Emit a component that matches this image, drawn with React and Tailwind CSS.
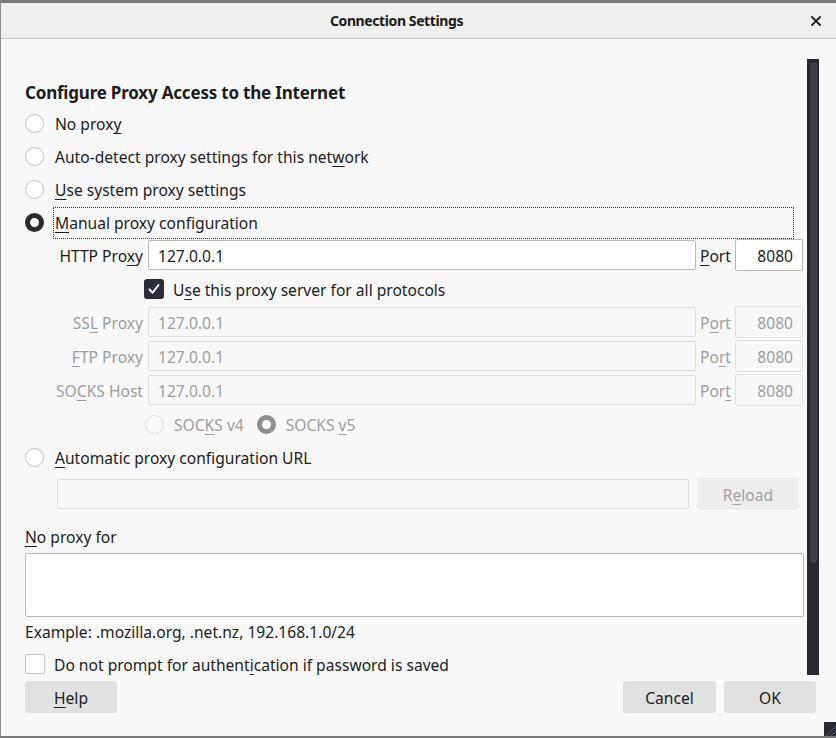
import React from "react";

const U = ({ children }) => <span className="underline underline-offset-[3px] decoration-1">{children}</span>;
const T = ({ children, className = "" }) => <span className={"pt-[3px] " + className}>{children}</span>;

function Radio({ state = "off" }) {
  if (state === "on")
    return <div className="w-[19px] h-[19px] rounded-full border-[5px] border-[#2b2b2f] bg-white shrink-0" />;
  if (state === "disabledOn")
    return <div className="w-[19px] h-[19px] rounded-full border-[5px] border-[#8f8f8f] bg-white shrink-0" />;
  if (state === "disabledOff")
    return <div className="w-[19px] h-[19px] rounded-full border border-[#dcdcdc] bg-[#fafafa] shrink-0" />;
  return <div className="w-[19px] h-[19px] rounded-full border border-[#c4c4c4] bg-white shrink-0" />;
}

function Field({ value, disabled, className = "", right }) {
  return (
    <div
      className={
        "flex items-center rounded-[2px] border px-[9px] " +
        (disabled ? "border-[#dedede] bg-[#f8f8f8] text-[#9d9d9d] " : "border-[#b9b9b9] bg-white text-[#1c1c1c] ") +
        (right ? "justify-end " : "") +
        className
      }
    >
      <T>{value}</T>
    </div>
  );
}

function ProxyRow({ label, disabled, portLabel }) {
  return (
    <div className="flex items-center h-[32px]">
      <div className={"w-[119px] text-right pr-[1px] pt-[3px] " + (disabled ? "text-[#9d9d9d]" : "")}>{label}</div>
      <Field value="127.0.0.1" disabled={disabled} className="ml-[4px] w-[548px] h-[30px]" />
      <div className={"w-[39px] pl-[4px] pt-[3px] " + (disabled ? "text-[#9d9d9d]" : "")}>{portLabel}</div>
      <Field value="8080" disabled={disabled} right className="w-[68px] h-[32px]" />
    </div>
  );
}

export default function App() {
  return (
    <div
      className="relative w-[836px] h-[738px] overflow-hidden bg-[#f8f8f8] text-[15.6px] text-[#1c1c1c] flex flex-col"
      style={{ fontFamily: '"Noto Sans", "Open Sans", sans-serif' }}
    >
      <div className="h-[3px] bg-[#7a7a7a] shrink-0" />
      <div className="flex-1 flex flex-col border-l border-[#8c8c8c] border-b-2 border-b-[#7a7a7a]">
        {/* title bar */}
        <div className="relative h-[36px] shrink-0 bg-[#efefef] border-b border-[#c6c6c6] flex items-center justify-center pr-[44px]">
          <span className="font-bold text-[14px] tracking-[-0.4px] text-[#1a1a1a]">Connection Settings</span>
          <svg className="absolute right-[15px] top-[13px]" width="10" height="10" viewBox="0 0 10 10">
            <path d="M1 1L9 9M9 1L1 9" stroke="#1a1a1a" strokeWidth="1.8" strokeLinecap="square" />
          </svg>
        </div>

        {/* content */}
        <div className="flex-1 flex flex-col pl-[24px] pr-[32px] pt-[39px]">
          <div className="h-[29px] flex items-center font-bold text-[17px] tracking-[-0.2px]">
            Configure Proxy Access to the Internet
          </div>
          <div className="h-[33px] flex items-center gap-[11px]">
            <Radio />
            <T>No prox<U>y</U></T>
          </div>
          <div className="h-[33px] flex items-center gap-[11px]">
            <Radio />
            <T>Auto-detect proxy settings for this net<U>w</U>ork</T>
          </div>
          <div className="h-[33px] flex items-center gap-[11px]">
            <Radio />
            <T><U>U</U>se system proxy settings</T>
          </div>
          <div className="h-[33px] flex items-center gap-[9px]">
            <Radio state="on" />
            <div className="flex-1 h-[32px] flex items-center pl-[1px] border border-dotted border-[#333] mr-[10px]">
              <T><U>M</U>anual proxy configuration</T>
            </div>
          </div>

          <ProxyRow label={<span>HTTP Pro<U>x</U>y</span>} portLabel={<span><U>P</U>ort</span>} />

          <div className="h-[34px] flex items-center pl-[119px] mt-[1px]">
            <div className="w-[20px] h-[20px] rounded-[3px] bg-[#2b2d35] flex items-center justify-center shrink-0">
              <svg width="14" height="14" viewBox="0 0 14 14">
                <path d="M2.5 7.5L5.6 10.8L11.5 3" stroke="white" strokeWidth="1.9" fill="none" strokeLinecap="round" strokeLinejoin="round" />
              </svg>
            </div>
            <T className="ml-[9px]">U<U>s</U>e this proxy server for all protocols</T>
          </div>

          <div className="flex flex-col gap-[2px]">
            <ProxyRow disabled label={<span>SS<U>L</U> Proxy</span>} portLabel={<span>P<U>o</U>rt</span>} />
            <ProxyRow disabled label={<span><U>F</U>TP Proxy</span>} portLabel={<span>Po<U>r</U>t</span>} />
            <ProxyRow disabled label={<span>SO<U>C</U>KS Host</span>} portLabel={<span>Por<U>t</U></span>} />
          </div>

          <div className="h-[32px] mt-[2px] flex items-center pl-[120px] text-[#9d9d9d]">
            <Radio state="disabledOff" />
            <T className="ml-[10px]">SOC<U>K</U>S v4</T>
            <div className="ml-[13px]"><Radio state="disabledOn" /></div>
            <T className="ml-[10px]">SOCKS <U>v</U>5</T>
          </div>

          <div className="h-[33px] mt-[1px] flex items-center gap-[11px]">
            <Radio />
            <T><U>A</U>utomatic proxy configuration URL</T>
          </div>

          <div className="h-[32px] mt-[4px] flex items-center pl-[32px]">
            <Field value="" disabled className="w-[632px] h-[30px]" />
            <div className="ml-[8px] w-[102px] h-[32px] rounded-[3px] bg-[#ededed] text-[#a3a3a3] flex items-center justify-center">
              <T>R<U>e</U>load</T>
            </div>
          </div>

          <div className="h-[20px] mt-[16px] flex items-center">
            <T><U>N</U>o proxy for</T>
          </div>
          <div className="mt-[7px] h-[64px] w-[779px] bg-white border border-[#b9b9b9] rounded-[2px]" />
          <div className="h-[20px] mt-[4px] flex items-center">
            <T>Example: .mozilla.org, .net.nz, 192.168.1.0/24</T>
          </div>
          <div className="h-[20px] mt-[13px] flex items-center">
            <div className="w-[20px] h-[20px] rounded-[2px] border border-[#c4c4c4] bg-white shrink-0" />
            <T className="ml-[9px]">Do not prompt for authent<U>i</U>cation if password is saved</T>
          </div>

          <div className="mt-[7px] flex items-center">
            <div className="w-[92px] h-[32px] rounded-[3px] bg-[#e1e1e1] flex items-center justify-center">
              <T><U>H</U>elp</T>
            </div>
            <div className="flex-1" />
            <div className="w-[93px] h-[32px] rounded-[3px] bg-[#e1e1e1] flex items-center justify-center"><T>Cancel</T></div>
            <div className="ml-[8px] w-[92px] h-[32px] rounded-[3px] bg-[#e1e1e1] flex items-center justify-center -mr-[12px]"><T>OK</T></div>
          </div>
        </div>
      </div>

      {/* overlay scrollbar */}
      <div className="absolute left-[807px] top-[59px] w-[12px] h-[616px] bg-[#262a35]">
        <div className="absolute left-[3px] top-[3px] w-[7px] h-[501px] rounded-full bg-[#3d414b]" />
      </div>
      {/* resize grip */}
      <div className="absolute right-0 bottom-[2px] w-[12px] h-[14px] bg-[#262a35] overflow-hidden">
        <svg width="12" height="14" viewBox="0 0 12 14">
          <path d="M12 4L2 14M12 9L7 14" stroke="#5a5e68" strokeWidth="1" />
        </svg>
      </div>
    </div>
  );
}
